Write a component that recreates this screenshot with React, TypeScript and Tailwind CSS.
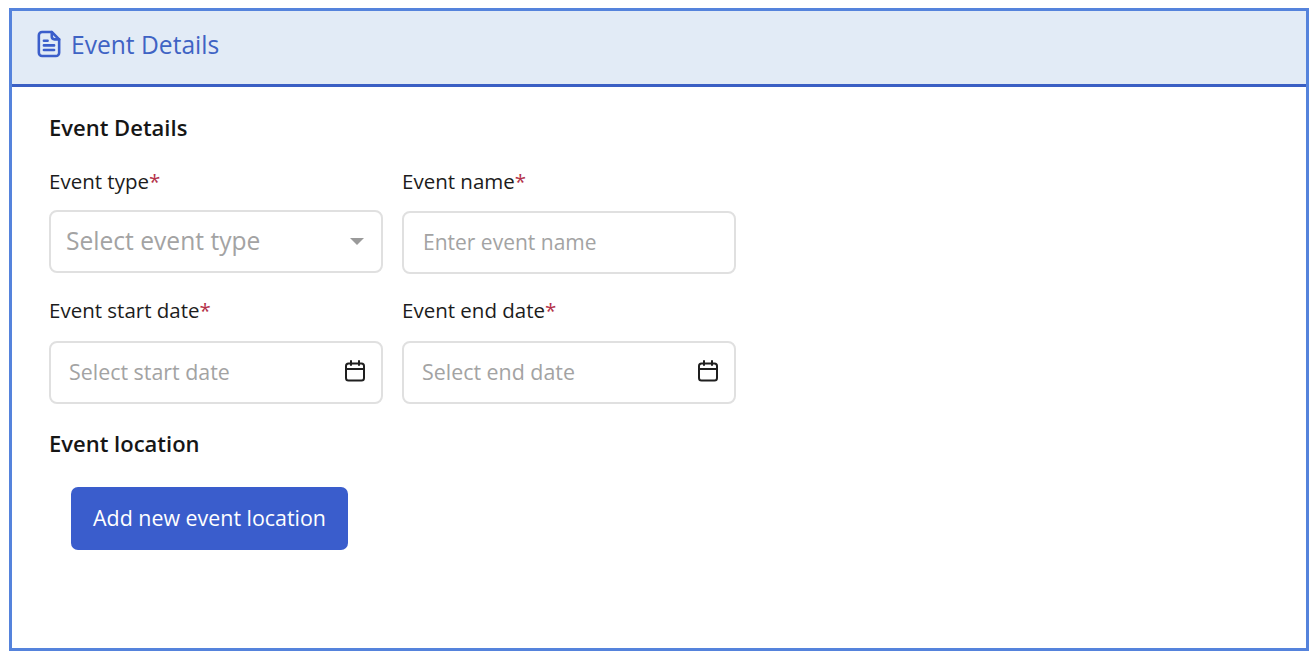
import React from "react";

const font = "font-['Open_Sans','Noto_Sans',sans-serif]";

function DocIcon() {
  return (
    <svg className="mb-[3px]" width="24" height="28" viewBox="0 0 26 30" fill="none" stroke="#3b5ecb" strokeWidth="2.8" strokeLinecap="round" strokeLinejoin="round">
      <path d="M16 2H5.5A3.5 3.5 0 0 0 2 5.5v19A3.5 3.5 0 0 0 5.5 28h15a3.5 3.5 0 0 0 3.5-3.5V10z" />
      <path d="M16 2v5a3 3 0 0 0 3 3h5" />
      <path d="M7.5 11.5h4M7.5 16.5h11M7.5 21.5h11" />
    </svg>
  );
}

function CalendarIcon() {
  return (
    <svg width="20" height="22" viewBox="0 0 20 22" fill="none" stroke="#1f1f1f" strokeWidth="2" strokeLinecap="round" strokeLinejoin="round">
      <rect x="1" y="3.5" width="18" height="17" rx="2.5" />
      <path d="M1 9h18M6 1v4M14 1v4" />
    </svg>
  );
}

function Label({ children }: { children: string }) {
  return (
    <div className="h-[29px] text-[20.5px] leading-[29px] text-[#1c1c1c]">
      {children}
      <span className="text-[#b4324a]">*</span>
    </div>
  );
}

function Box({ children }: { children: React.ReactNode }) {
  return (
    <div className="flex h-[63px] w-[334px] items-center justify-between rounded-[8px] border-2 border-[#e0e0e0] bg-white">
      {children}
    </div>
  );
}

export default function App() {
  return (
    <div className={`h-[660px] w-[1316px] bg-white pl-[9px] pr-[7px] pt-[8px] pb-[8px] ${font}`}>
      <div className="h-[643px] border-[3px] border-[#5583dc] bg-white">
        <div className="flex h-[76px] items-center gap-[10px] border-b-[3px] border-[#3a5fc4] bg-[#e2ebf6] pb-[5px] pl-[25px]">
          <DocIcon />
          <span className="text-[24.6px] text-[#3f63c4]">Event Details</span>
        </div>
        <div className="pl-[37px] pt-[25px]">
          <h2 className="h-[30px] text-[22px] font-semibold leading-[30px] text-[#161616]">Event Details</h2>
          <div className="mt-[25px] grid w-[687px] grid-cols-[334px_334px] gap-x-[19px]">
            <div>
              <Label>Event type</Label>
              <div className="mt-[14px]">
                <Box>
                  <span className="pl-[15px] text-[24.6px] text-[#a3a3a3]">Select event type</span>
                  <span className="mr-[17px] h-0 w-0 border-x-[7px] border-t-[7px] border-x-transparent border-t-[#9a9a9a]" />
                </Box>
              </div>
            </div>
            <div>
              <Label>Event name</Label>
              <div className="mt-[15px]">
                <Box>
                  <span className="pl-[19px] text-[21px] text-[#a3a3a3]">Enter event name</span>
                </Box>
              </div>
            </div>
            <div className="mt-[22px]">
              <Label>Event start date</Label>
              <div className="mt-[16px]">
                <Box>
                  <span className="pl-[18px] text-[21.4px] text-[#a3a3a3]">Select start date</span>
                  <span className="mb-[4px] mr-[16px] flex"><CalendarIcon /></span>
                </Box>
              </div>
            </div>
            <div className="mt-[22px]">
              <Label>Event end date</Label>
              <div className="mt-[16px]">
                <Box>
                  <span className="pl-[18px] text-[21.4px] text-[#a3a3a3]">Select end date</span>
                  <span className="mb-[4px] mr-[16px] flex"><CalendarIcon /></span>
                </Box>
              </div>
            </div>
          </div>
          <h2 className="mt-[24px] h-[30px] text-[22px] font-semibold leading-[30px] text-[#161616]">Event location</h2>
          <button className="ml-[22px] mt-[29px] h-[63px] w-[277px] rounded-[7px] bg-[#3a5dcc] text-[21.4px] text-white">
            Add new event location
          </button>
        </div>
      </div>
    </div>
  );
}
